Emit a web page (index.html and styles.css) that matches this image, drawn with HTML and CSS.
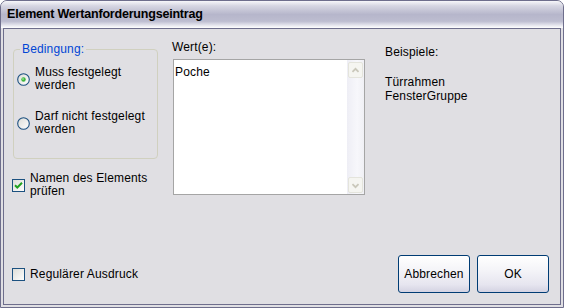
FILE: index.html
```html
<!DOCTYPE html>
<html lang="de">
<head>
  <meta charset="UTF-8" />
  <title>Element Wertanforderungseintrag</title>
  <link rel="stylesheet" href="styles.css">
</head>
<body>
  <div class="window">
    <div class="titlebar">Element Wertanforderungseintrag</div>

    <div class="dialog-body">
      <div class="main-row">
        <div class="left-col">
          <fieldset class="group">
            <legend>Bedingung:</legend>
            <label class="option">
              <svg class="radio" width="13" height="13" viewBox="0 0 13 13">
                <defs>
                  <linearGradient id="rg1" x1="0" y1="0" x2="1" y2="1">
                    <stop offset="0" stop-color="#dcdcd7"/>
                    <stop offset="1" stop-color="#ffffff"/>
                  </linearGradient>
                </defs>
                <circle cx="6.5" cy="6.5" r="5.8" fill="url(#rg1)" stroke="#1c5180" stroke-width="1.1"/>
                <circle cx="6.5" cy="6.5" r="2.2" fill="#3fb63f"/>
                <circle cx="6" cy="6" r="0.9" fill="#8fe08f"/>
              </svg>
              <span>Muss festgelegt<br>werden</span>
            </label>
            <label class="option">
              <svg class="radio" width="13" height="13" viewBox="0 0 13 13">
                <defs>
                  <linearGradient id="rg2" x1="0" y1="0" x2="1" y2="1">
                    <stop offset="0" stop-color="#dcdcd7"/>
                    <stop offset="1" stop-color="#ffffff"/>
                  </linearGradient>
                </defs>
                <circle cx="6.5" cy="6.5" r="5.8" fill="url(#rg2)" stroke="#1c5180" stroke-width="1.1"/>
              </svg>
              <span>Darf nicht festgelegt<br>werden</span>
            </label>
          </fieldset>

          <label class="check check-name">
            <svg class="box" width="13" height="13" viewBox="0 0 13 13">
              <defs>
                <linearGradient id="cg1" x1="0" y1="0" x2="1" y2="1">
                  <stop offset="0" stop-color="#dcdcd7"/>
                  <stop offset="1" stop-color="#ffffff"/>
                </linearGradient>
              </defs>
              <rect x="0.5" y="0.5" width="12" height="12" fill="url(#cg1)" stroke="#1c5180"/>
              <path d="M3 6.2 L5.3 8.5 L10 3.8" fill="none" stroke="#21a121" stroke-width="2"/>
            </svg>
            <span>Namen des Elements<br>prüfen</span>
          </label>
        </div>

        <div class="middle-col">
          <div class="field-label">Wert(e):</div>
          <div class="values">
            <div class="values-text">Poche</div>
            <div class="scrollbar">
              <div class="scroll-btn">
                <svg width="15" height="15" viewBox="0 0 15 15"><path d="M4 9 L7.5 5.5 L11 9" fill="none" stroke="#c9c7ba" stroke-width="2"/></svg>
              </div>
              <div class="scroll-track"></div>
              <div class="scroll-btn">
                <svg width="15" height="15" viewBox="0 0 15 15"><path d="M4 6 L7.5 9.5 L11 6" fill="none" stroke="#c9c7ba" stroke-width="2"/></svg>
              </div>
            </div>
          </div>
        </div>

        <div class="right-col">
          <div class="examples-title">Beispiele:</div>
          <div>Türrahmen</div>
          <div>FensterGruppe</div>
        </div>
      </div>

      <div class="bottom-row">
        <label class="check">
          <svg class="box" width="13" height="13" viewBox="0 0 13 13">
            <defs>
              <linearGradient id="cg2" x1="0" y1="0" x2="1" y2="1">
                <stop offset="0" stop-color="#dcdcd7"/>
                <stop offset="1" stop-color="#ffffff"/>
              </linearGradient>
            </defs>
            <rect x="0.5" y="0.5" width="12" height="12" fill="url(#cg2)" stroke="#1c5180"/>
          </svg>
          <span>Regulärer Ausdruck</span>
        </label>

        <div class="buttons">
          <button type="button" class="btn">Abbrechen</button>
          <button type="button" class="btn">OK</button>
        </div>
      </div>
    </div>
  </div>
</body>
</html>
```

FILE: styles.css
```css
:root {
  --face: #e0dfe3;
  --frame: #6e6e8c;
  --ui-font: "Liberation Sans", Arial, sans-serif;
}

* {
  box-sizing: border-box;
  margin: 0;
  padding: 0;
}

body {
  width: 564px;
  height: 308px;
  overflow: hidden;
  font-family: var(--ui-font);
  font-size: 12px;
  line-height: 14px;
  letter-spacing: 0.15px;
  color: #000;
  background: #ffffff;
}

.window {
  width: 564px;
  height: 308px;
  display: flex;
  flex-direction: column;
  border: 1px solid var(--frame);
  border-radius: 7px 7px 0 0;
  padding: 0 2px 2px;
  background: var(--face);
  overflow: hidden;
}

.titlebar {
  height: 27px;
  margin: 0 -2px;
  padding: 3px 0 0 6px;
  font-size: 12.5px;
  font-weight: bold;
  line-height: 20px;
  letter-spacing: -0.2px;
  background: linear-gradient(#f7f7fa 0%, #d6d6e2 18%, #b6b6cb 50%, #bdbdd0 75%, #e6e6ee 90%, #ffffff 100%);
}

.dialog-body {
  flex: 1;
  display: flex;
  flex-direction: column;
  border: 1px solid var(--frame);
  padding: 0 11px 11px 8px;
}

.main-row {
  display: flex;
  align-items: flex-start;
}

.left-col {
  width: 146px;
  padding-top: 13px;
}

.group {
  margin-left: 1px;
  width: 145px;
  border: 1px solid #d0d0bf;
  border-radius: 4px;
  padding: 10px 3px 22px 3px;
}

.group legend {
  margin-left: 3px;
  padding: 0 2px;
  color: #0046d5;
}

.option {
  display: flex;
  align-items: center;
  gap: 5px;
  line-height: 13px;
}

.option + .option {
  margin-top: 18px;
}

.radio {
  flex: none;
}

.check {
  display: flex;
  align-items: center;
  gap: 5px;
}

.check-name {
  margin-top: 13px;
  line-height: 13px;
}

.box {
  flex: none;
}

.middle-col {
  width: 193px;
  margin-left: 14px;
  padding-top: 11px;
}

.field-label {
  margin-bottom: 5px;
}

.values {
  margin-left: 1px;
  width: 192px;
  height: 136px;
  display: flex;
  border: 1px solid #a5a5a5;
  background: #fff;
}

.values-text {
  flex: 1;
  padding: 5px 0 0 1px;
}

.scrollbar {
  width: 17px;
  display: flex;
  flex-direction: column;
  padding: 2px 1px 1px 1px;
  background: linear-gradient(90deg, #eeeef5, #f7f7fb 60%, #f0f0f5);
}

.scroll-btn {
  height: 16px;
  display: flex;
  align-items: center;
  justify-content: center;
  border: 1px solid #e4e4dc;
  border-radius: 2px;
  background: #f5f5f1;
}

.scroll-track {
  flex: 1;
}

.right-col {
  margin-left: 20px;
  padding-top: 16px;
}

.examples-title {
  margin-bottom: 16px;
}

.bottom-row {
  margin-top: auto;
  display: flex;
  align-items: center;
  justify-content: space-between;
}

.buttons {
  display: flex;
  gap: 7px;
}

.btn {
  width: 72px;
  height: 38px;
  font-family: var(--ui-font);
  font-size: 12px;
  letter-spacing: 0.15px;
  color: #000;
  border: 1px solid #003c74;
  border-radius: 3px;
  background: linear-gradient(#ffffff 0%, #f4f4f8 40%, #e6e5ef 80%, #d4d3e2 100%);
}
```
